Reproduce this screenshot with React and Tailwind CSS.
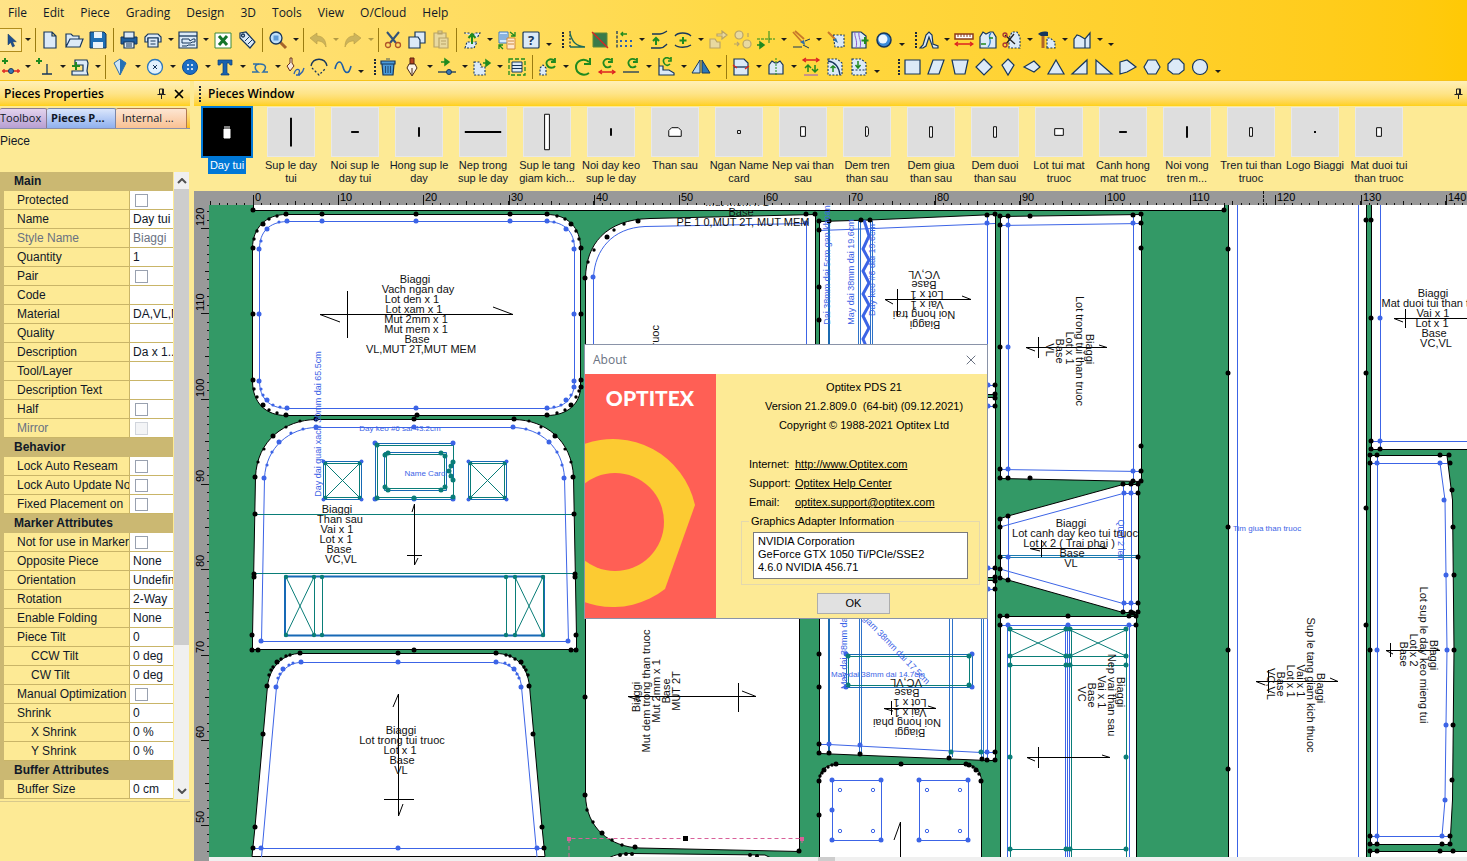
import { X } from 'lucide-react';

const NAVY = '#16365c';
const ICE = '#dceaf7';
const GREEN = '#1f8a1f';
const BLUE = '#3c64e6';
const TEAL = '#0a7d78';

const solid = { fill: ICE, stroke: NAVY, strokeWidth: 1.2 };
const line = { fill: 'none', stroke: NAVY, strokeWidth: 1.3 };
const green = { fill: 'none', stroke: GREEN, strokeWidth: 2 };
const red = { fill: 'none', stroke: '#d22', strokeWidth: 1.3 };
const dash = { fill: ICE, stroke: NAVY, strokeWidth: 1.1, strokeDasharray: '2 1.5' };
const faded = { fill: '#e8d9a0', stroke: '#b8a468', strokeWidth: 1.2 };
const plus = 'M4 1v6M1 4h6';

// toolbar drawings, all on a 20 x 20 grid
const ICONS = {
  cursor: <path d="M7 4v11l2.600-2.500 2 4.500 2-1-2-4.300h3.700z" fill="#1d4f91" stroke={NAVY} strokeWidth="0.500" />,
  new: <path d="M4 2h8l4 4v12H4zM12 2v4h4" {...solid} />,
  open: <path d="M2 17V4h5l2 2h6v3M2 17l4-8h13l-3 8z" {...solid} />,
  save: <><path d="M2 2h14l2 2v14H2z" fill="#1f6fb5" stroke={NAVY} /><path d="M6 2h8v6H6zM5 12h10v6H5z" fill="#eaf3fb" /></>,
  print: <><path d="M2 7h16v7H2z" fill="#1f5f9f" stroke={NAVY} /><path d="M5 2h10v6H5zM5 12h10v6H5z" {...solid} /><path d="M7 14h6M7 16h6" {...line} strokeWidth="1" /></>,
  plot: <><path d="M2 12V7l3-3h10l3 3v5h-3V8H5v4z" {...solid} /><path d="M5 8h10v9H5zM7.500 11h5M7.500 14h5" {...solid} /></>,
  layout: <><path d="M1 2h18v16H1z" {...solid} /><path d="M1 6h18" {...line} /><path d="M4 13V9h7l1 2 3-2h2v3h-3l-1 1zM4 16h5l1-1h7" {...line} strokeWidth="1" /></>,
  excel: <><path d="M2 3h16v15H2z" fill="#fff" stroke="#3a8a3a" /><path d="M6 6l8 9M14 6l-8 9" stroke="#14752a" strokeWidth="3" /></>,
  tag: <><path d="M3 3l6-1 9 10-5 6L3 8z" {...solid} /><circle cx="6" cy="5.500" r="1.500" {...line} /><path d="M8 11l4-4M11 14l4-4" {...line} strokeWidth="1" /></>,
  zoom: <><path d="M12 12l6 6" stroke="#a5642a" strokeWidth="3" /><circle cx="8" cy="8" r="6" fill="#bfe0fa" stroke={NAVY} strokeWidth="1.300" /><path d="M5.500 5.500h5v5h-5z" fill="#5e9bd6" /></>,
  undo: <path d="M2 8l7-5v3c6 0 9 4 9 11-2-5-5-6-9-6v3z" fill="#ccb45c" stroke="#b59b45" strokeWidth="0.600" />,
  redo: <path d="M18 8l-7-5v3C5 6 2 10 2 17c2-5 5-6 9-6v3z" fill="#ccb45c" stroke="#b59b45" strokeWidth="0.600" />,
  cut: <><path d="M4 2l9 11M16 2L7 13" stroke="#31527a" strokeWidth="2" /><circle cx="5" cy="15" r="2.500" {...line} stroke="#b0542a" /><circle cx="15" cy="15" r="2.500" {...line} stroke="#b0542a" /></>,
  copy: <><path d="M8 2h10v11H8z" {...solid} /><path d="M2 7h9l2 3v8H2z" {...solid} /></>,
  paste: <><path d="M3 3h12v14H3zM7 1h4v3H7z" {...faded} /><path d="M8 8h9v10H8zM10 11h5M10 14h5" {...faded} /></>,
  exportPiece: <><path d="M2 3h5l3 3 3-3h5l-3 5M3 18l2-6h10l-3 6z" {...dash} /><path d="M10 14V5M6.500 8L10 4l3.500 4" {...green} /></>,
  replace: <><path d="M2 2h9v11H2z" fill="#d6ebff" stroke="#3a7ac0" /><path d="M3 5h7M3 7h7M3 9h7" stroke="#3a7ac0" /><path d="M10 8h8v11h-8z" fill="#ffe9cf" stroke="#d08a3a" /><path d="M11 11h6M11 14h6" stroke="#d08a3a" /><path d="M13 2l5 4M18 2v4h-4M6 19l-4-4M2 19v-4h4" {...green} strokeWidth="1.300" /></>,
  help: <><rect x="2" y="2" width="16" height="16" rx="1" {...solid} /><text x="10" y="15" textAnchor="middle" fontSize="13" fontWeight="700" fill={NAVY}>?</text></>,
  curve: <><path d="M4 1v17" {...line} strokeDasharray="2 1.500" /><path d="M4 3c2 9 6 13 15 14M4 17h15" {...line} stroke="#1b6a5a" /></>,
  shade: <><path d="M3 3h14v14H3z" fill="#3a7a4a" stroke="#5c8a3a" /><path d="M2 2l16 16" {...red} /></>,
  points: <><path d="M3 1v18" {...line} strokeDasharray="3 1.500" /><path d="M13 4H7M9 2L7 4l2 2" {...green} strokeWidth="1.300" /><path d="M6 11h2M11 11h2M16 11h2M6 16h2M11 16h2M16 16h2" stroke="#2d62b0" strokeWidth="2" /></>,
  curveUp: <><path d="M3 4h8c4 0 5-2 7-3M2 18h9c4 0 5-2 7-4" {...line} /><path d="M7 15V9M4 11l3-3 3 3" {...green} /></>,
  curveAdd: <><path d="M2 6c3-4 12-4 16 0M2 15c3 3 12 3 16 0" {...line} /><path d="M10 7v7M6.500 10.500h7" {...green} /></>,
  fadedPiece: <><path d="M2 9h5l2 3h3v6H2z" {...faded} /><path d="M9 4h5V1l5 4-5 4V6H9z" {...faded} /></>,
  fadedRound: <><circle cx="7" cy="5" r="4" {...faded} /><circle cx="15" cy="14" r="4" {...faded} /><path d="M2 14h5M5 12l2 2-2 2M16 3v4" {...faded} /></>,
  addLine: <><path d="M1 9h18" {...line} stroke={GREEN} strokeWidth="1" strokeDasharray="3 1" /><path d="M13 1v12" {...line} stroke={GREEN} strokeWidth="1" /><path d="M1 15h4M4 12l4 3-4 3z" {...green} fill={GREEN} strokeWidth="1.500" /></>,
  brush: <><path d="M2 2l9 10M4 1l9 8" stroke="#c9782a" strokeWidth="1.800" /><path d="M9 12l4-2 1 5z" fill="#2d6ea8" /><path d="M2 17h9M12 15l6 3M14 11l5-2" {...line} strokeWidth="1" /></>,
  brushPiece: <><path d="M7 5h11v12H9z" {...dash} /><path d="M2 2l7 7" stroke="#c9782a" strokeWidth="2" /><path d="M7 10l3-2 2 5z" fill="#2d6ea8" /></>,
  waves: <><path d="M2 2h9l5 4v12H2z" {...solid} /><path d="M5 2c-1 5 3 8 1 16M9 2c-1 6 3 8 1 16" {...line} stroke="#8a5ad0" strokeWidth="1" /><path d="M15 7v7M11.500 10.500h7" {...green} /></>,
  ring: <><circle cx="10" cy="10" r="7" fill="#3b8ad8" stroke={NAVY} strokeWidth="1.500" /><circle cx="9" cy="9" r="4.500" fill="#eef7ff" /></>,
  compass: <path d="M1 18l3-3 3-10 3-3 3 3 1 9 5 2v2h-5l-4-11-3 9-3 2z" {...solid} />,
  ruler: <><path d="M1 4h18v5H1z" fill="#fff" stroke="#8a3a1a" strokeWidth="1.500" /><path d="M4 4v3M7 4v3M10 4v3M13 4v3M16 4v3" stroke="#8a3a1a" /><path d="M1 14h18M4 12l-3 2 3 2M16 12l3 2-3 2" {...red} /></>,
  splitPiece: <><path d="M2 18V7l3-5 3 2 4-2 3 0 3 5v11z" {...solid} /><path d="M13 3c-5 4 3 7-3 14" {...line} stroke="#2d7cc8" /><path d="M3 14h5M15 8h-4" {...green} strokeWidth="1.500" /></>,
  cutPiece: <><path d="M7 18V8l3-6h5l3 5v11z" {...dash} /><path d="M3 5l10 9M12 4L4 14" {...line} stroke="#222" /><circle cx="3" cy="15" r="2" {...line} stroke="#a33" /><circle cx="3" cy="5" r="2" {...line} stroke="#a33" /></>,
  hammer: <><path d="M6 4v14" stroke="#b0642a" strokeWidth="3" /><path d="M1 4c2-2 5-3 10-2v4H4z" fill={NAVY} /><path d="M10 18V8h3l5 4v6z" {...dash} /></>,
  twoPieces: <path d="M2 18V9l3-4 3 1 5 3 5-6v15zM13 9v9" {...solid} />,
  addPoint: <><path d={plus} {...green} /><path d="M1 14h18M3 12v4M17 12v4" {...red} /><circle cx="10" cy="14" r="2.500" fill="#3a78b8" stroke={NAVY} /></>,
  addNotch: <><path d={plus} {...green} /><path d="M12 7v10M7 17h10" {...line} /></>,
  sewing: <><path d="M5 3h12l1 3-1 8 1 4H2v-4h11V8H5z" {...solid} /><path d="M6 5v8M2 9h8" {...green} /></>,
  diamond: <><path d="M4 6l6-4 6 4-6 12z" fill="#cfe6f8" stroke="#2c6ca8" /><path d="M10 2l6 4-6 12z" fill="#2471b5" /></>,
  circleX: <><circle cx="10" cy="10" r="7.500" fill="#e2f1fd" stroke="#2c76ba" strokeWidth="1.300" /><path d="M8 8l4 4M12 8l-4 4" {...line} strokeWidth="1" /></>,
  button: <><circle cx="10" cy="10" r="7.500" fill="#1c6dc4" stroke="#0d4a94" /><g fill="#fff"><circle cx="8" cy="8" r="1" /><circle cx="12" cy="8" r="1" /><circle cx="8" cy="12" r="1" /><circle cx="12" cy="12" r="1" /></g></>,
  text: <path d="M3 3h14v5h-2l-1-2h-2v10l2 1v1H6v-1l2-1V6H6L5 8H3z" fill="#1a62ae" stroke="#0d3f78" strokeWidth="0.700" />,
  omega: <path d="M2 15h6c-4-3-4-8 2-8s7 4 3 8h5M3 7h6" fill="none" stroke="#2f6fa8" strokeWidth="1.500" />,
  penCurve: <><path d="M5 1v5l-3 3 3 5 4-5-2-3V1z" fill="#f7e9da" stroke="#6b3018" /><path d="M9 17c2-7 7-5 5-1s4 0 5-5M11 18h4" {...line} stroke="#2d62b0" /></>,
  arcDash: <><path d="M2 9c2-9 14-9 16 0" {...line} /><path d="M3 11l7 7 7-7" {...line} strokeDasharray="2 2" /></>,
  wave: <path d="M2 12c2-9 6-9 8-2s6 8 8-1" {...line} stroke="#1c5ea8" strokeWidth="1.600" />,
  trash: <><path d="M3 4h14v3H3zM4 7h12l-1 11H5z" fill="#4b9ad8" stroke={NAVY} strokeWidth="1.200" /><path d="M8 2h4M7.500 9v7M10 9v7M12.500 9v7" {...line} strokeWidth="0.800" /></>,
  pen: <><path d="M8 1h4v6H8z" fill="#b5431f" stroke="#5c2010" /><path d="M7 7h6l2 4-5 8-5-8z" fill="#fbf3e6" stroke="#4b2a18" /><path d="M10 11v7" stroke="#4b2a18" /></>,
  movePoint: <><path d="M4 5h4M8 2l4 3-4 3z" {...green} fill={GREEN} strokeWidth="1.500" /><path d="M1 15h18" {...line} /><circle cx="12" cy="15" r="2.500" fill="#3a78b8" stroke={NAVY} /></>,
  movePiece: <><path d="M2 5h5l2 3v2h4v8H2z" {...dash} /><path d="M11 6h4M14 3l4 3-4 3z" {...green} fill={GREEN} strokeWidth="1.500" /></>,
  frame: <><path d="M2 2h16v16H2z" fill="none" stroke={GREEN} strokeWidth="1.300" strokeDasharray="4 2" /><path d="M5 5h10v10H5zM5 8.500h10M5 11.500h10" {...solid} strokeWidth="1" /></>,
  rotatePiece: <><path d="M2 18v-7l3-3 3 3v7z" {...dash} /><path d="M17 4C12 0 7 4 9 8s7 3 8 1M17 1v4h-4" {...green} strokeWidth="1.800" /></>,
  rotate: <path d="M16 5C11 0 3 4 3 10s7 10 13 6M17 1v6h-6" {...green} />,
  rotateMeasure: <><path d="M14 3C9 0 5 4 7 8s6 2 7 1M15 1v4h-4" {...green} strokeWidth="1.800" /><path d="M2 15h16M5 13l-3 2 3 2M15 13l3 2-3 2" {...red} /></>,
  rotateLine: <><path d="M15 3C10 0 6 4 8 8s6 2 7 1M16 1v4h-4" {...green} strokeWidth="1.800" /><path d="M2 15h16" {...line} /></>,
  rotateEdge: <><path d="M3 1v17h15v-2l-5-3H7V9H3" {...solid} /><path d="M14 2C10-1 6 2 8 6s5 2 6 1M15 0v4h-3" {...green} strokeWidth="1.600" /></>,
  mirror: <><path d="M9 3v13H1z" fill="#b7d9f4" stroke={NAVY} /><path d="M11 3v13h8z" fill="#2b78b8" stroke={NAVY} /></>,
  seam: <><path d="M3 2h10l4 4v12H3z" {...solid} /><path d="M3 10h14" {...line} /><path d="M2 8l4 3M14 12l4-3" {...red} /></>,
  symmetric: <><path d="M3 17V8l3-4 3 2h2l3-2 3 4v9z" {...solid} /><path d="M10 1v18" stroke={GREEN} strokeDasharray="2 1" /></>,
  swap: <><path d="M2 3h16M5 1L2 3l3 2M15 1l3 2-3 2" {...red} /><path d="M7 15V8M4 11l3-3 3 3M14 8v7M11 12l3 3 3-3" {...green} strokeWidth="1.500" /><path d="M3 18h14" stroke="#9050d0" /></>,
  pieceArc: <><path d="M3 2h9l5 4v12H3z" {...dash} /><path d="M3 4c7 1 11 6 12 14" {...line} /><path d="M8 15V9M5.500 11L8 9l2.500 2" {...green} strokeWidth="1.500" /></>,
  pieceDown: <><path d="M3 2h9l5 4v12H3zM3 13h14" {...dash} /><path d="M9 4v6M6.500 8L9 11l2.500-3" {...green} strokeWidth="1.500" /></>,
  sRect: <path d="M3 3h15v14H3z" {...solid} />,
  sPara: <path d="M7 3h11l-5 14H2z" {...solid} />,
  sTrap: <path d="M2 3h16l-3 14H5z" {...solid} />,
  sRhomb: <path d="M10 2l8 8-8 8-8-8z" {...solid} />,
  sKite: <path d="M10 2l6 6-6 10-6-10z" {...solid} />,
  sKiteFlat: <path d="M2 10l10-6 6 6-6 5z" {...solid} />,
  sTri: <path d="M10 3l8 14H2z" {...solid} />,
  sRightTri: <path d="M17 3v14H2z" {...solid} />,
  sLeftTri: <path d="M2 3v14h16z" {...solid} />,
  sPent: <path d="M2 5l7-2 9 7-9 5-7 2z" {...solid} />,
  sHex: <path d="M6 3h8l4 7-4 7H6l-4-7z" {...solid} />,
  sOct: <path d="M7 2h6l5 5v6l-5 4H7l-5-4V7z" {...solid} />,
  sCircle: <circle cx="10" cy="10" r="7.500" {...solid} />,
};

// v = drop-down, x = dimmed drop-down, | and / = separators, o = overflow, g = grip
const ROW_ONE = 'new open save | print plot v layout v excel tag | zoom v / undo x redo x / cut copy paste | exportPiece v replace help o g curve shade points v curveUp curveAdd v fadedPiece fadedRound addLine v brush v brushPiece waves ring o g compass v ruler splitPiece cutPiece v hammer v twoPieces v o';
const ROW_TWO = 'v addNotch v sewing v / diamond v circleX v button v text v omega v penCurve arcDash wave o g trash pen v movePoint v movePiece v frame | rotatePiece v rotate rotateMeasure rotateLine v rotateEdge v mirror v / seam v symmetric v swap pieceArc pieceDown o G sRect sPara sTrap sRhomb sKite sKiteFlat sTri sRightTri sLeftTri sPent sHex sOct sCircle o';

const MENUS = ['File', 'Edit', 'Piece', 'Grading', 'Design', '3D', 'Tools', 'View', 'O/Cloud', 'Help'];

function Glyph({ name }) {
  return (
    <svg viewBox="0 0 20 20" className="h-5 w-5 shrink-0" aria-hidden="true">
      {ICONS[name]}
    </svg>
  );
}

function Caret({ faint }) {
  return (
    <svg viewBox="0 0 6 3" className="h-[3px] w-1.5" aria-hidden="true">
      <path d="M0 0h6L3 3z" fill={faint ? '#b39b45' : '#1c1c1c'} />
    </svg>
  );
}

function Grip({ className }) {
  return (
    <span className={`flex h-7 shrink-0 items-center justify-end ${className}`}>
      <span className="h-4 border-l-2 border-dotted border-gray-800" />
    </span>
  );
}

function ToolItem({ code }) {
  if (code === '|') return <span className="mx-[3px] h-6 w-px shrink-0 bg-[#9a7b10]" />;
  if (code === '/') return <span className="mx-0.5 h-6 w-px shrink-0 bg-[#9a7b10]" />;
  if (code === 'g') return <Grip className="w-2.5" />;
  if (code === 'G') return <Grip className="w-[18px]" />;
  if (code === 'v' || code === 'x') {
    return (
      <button aria-label="More" className="flex h-6 w-[11px] shrink-0 items-center justify-center">
        <Caret faint={code === 'x'} />
      </button>
    );
  }
  if (code === 'o') {
    return (
      <button aria-label="Toolbar options" className="flex h-6 w-[11px] shrink-0 items-end justify-center pb-1.5">
        <Caret />
      </button>
    );
  }
  return (
    <button aria-label={code} className="flex h-6 w-6 shrink-0 items-center justify-center">
      <Glyph name={code} />
    </button>
  );
}

function Toolbars() {
  return (
    <header className="shrink-0 overflow-hidden border-b border-[#f5c21a] bg-linear-to-r from-[#ffe387] via-[#ffd944] to-[#ffc905]">
      <nav className="flex h-[26px] items-center gap-4 pl-2 text-xs text-gray-900">
        {MENUS.map((m) => (
          <button key={m}>{m}</button>
        ))}
      </nav>
      <div className="flex h-[27px] items-center">
        <button aria-label="Select" className="flex h-6 w-[22px] shrink-0 items-center justify-center border border-l-0 border-[#b08c1c] bg-[#ffeaa0]">
          <Glyph name="cursor" />
        </button>
        <ToolItem code="v" />
        <ToolItem code="/" />
        {ROW_ONE.split(' ').map((c, i) => <ToolItem key={i} code={c} />)}
      </div>
      <div className="flex h-[27px] items-center">
        <button aria-label="Add point" className="flex h-6 w-[22px] shrink-0 items-center justify-center">
          <Glyph name="addPoint" />
        </button>
        {ROW_TWO.split(' ').map((c, i) => <ToolItem key={i} code={c} />)}
      </div>
    </header>
  );
}

function PinIcon() {
  return (
    <svg viewBox="0 0 9 11" className="h-[11px] w-[9px]" aria-hidden="true">
      <path d="M2.500 1h4v5h-4zM0.500 6.500h8M4.500 7v4M5.500 1v5" fill="none" stroke="#222" />
    </svg>
  );
}

const CHECK = Symbol('check');
const CHECK_OFF = Symbol('check-off');

const ROWS = [
  { head: 'Main' },
  { label: 'Protected', value: CHECK },
  { label: 'Name', value: 'Day tui' },
  { label: 'Style Name', value: 'Biaggi', dim: true },
  { label: 'Quantity', value: '1' },
  { label: 'Pair', value: CHECK },
  { label: 'Code', value: '' },
  { label: 'Material', value: 'DA,VL,MUT' },
  { label: 'Quality', value: '' },
  { label: 'Description', value: 'Da x 1..' },
  { label: 'Tool/Layer', value: '' },
  { label: 'Description Text', value: '' },
  { label: 'Half', value: CHECK },
  { label: 'Mirror', value: CHECK_OFF, dim: true },
  { head: 'Behavior' },
  { label: 'Lock Auto Reseam', value: CHECK },
  { label: 'Lock Auto Update Notches', value: CHECK },
  { label: 'Fixed Placement on', value: CHECK },
  { head: 'Marker Attributes' },
  { label: 'Not for use in Marker', value: CHECK },
  { label: 'Opposite Piece', value: 'None' },
  { label: 'Orientation', value: 'Undefined' },
  { label: 'Rotation', value: '2-Way' },
  { label: 'Enable Folding', value: 'None' },
  { label: 'Piece Tilt', value: '0' },
  { label: 'CCW Tilt', value: '0 deg', sub: true },
  { label: 'CW Tilt', value: '0 deg', sub: true },
  { label: 'Manual Optimization', value: CHECK },
  { label: 'Shrink', value: '0' },
  { label: 'X Shrink', value: '0 %', sub: true },
  { label: 'Y Shrink', value: '0 %', sub: true },
  { head: 'Buffer Attributes' },
  { label: 'Buffer Size', value: '0 cm' },
];

function PropertyRow({ row }) {
  if (row.head) {
    return (
      <tr className="h-[19px] bg-[#cbb872]">
        <th colSpan={3} className="overflow-hidden pb-px pl-3.5 text-left leading-[17px] font-bold whitespace-nowrap">{row.head}</th>
      </tr>
    );
  }
  const isCheck = row.value === CHECK || row.value === CHECK_OFF;
  const id = row.label.toLowerCase().replace(/[^a-z]+/g, '-');
  return (
    <tr className={`h-[19px] ${row.dim ? 'text-gray-500' : 'text-gray-900'}`}>
      <td className="bg-[#cbb872]" />
      <td className={`overflow-hidden border-b border-[#c9b568] leading-[18px] whitespace-nowrap ${row.sub ? 'pl-[27px]' : 'pl-[13px]'}`}>
        {isCheck ? <label htmlFor={id}>{row.label}</label> : row.label}
      </td>
      <td className="overflow-hidden border-b border-l border-[#c9b568] bg-white pl-[3px] leading-[18px] whitespace-nowrap">
        {isCheck ? (
          <input
            id={id}
            type="checkbox"
            disabled={row.value === CHECK_OFF}
            className="ml-0.5 block h-[13px] w-[13px] appearance-none border border-gray-400 bg-white disabled:border-gray-300 disabled:bg-gray-100"
          />
        ) : row.value}
      </td>
    </tr>
  );
}

function ScrollArrow({ d }) {
  return (
    <button aria-label="Scroll" className="flex h-[17px] w-full shrink-0 items-center justify-center bg-[#f0f0f0]">
      <svg viewBox="0 0 10 6" className="h-1.5 w-2.5" aria-hidden="true">
        <path d={d} fill="none" stroke="#505050" strokeWidth="2" />
      </svg>
    </button>
  );
}

function PropertiesPanel() {
  return (
    <aside className="flex w-[190px] shrink-0 flex-col bg-[#fdea95]">
      <div className="flex h-[25px] shrink-0 items-center bg-linear-to-b from-[#fff0b8] via-[#fee488] to-[#ffd011] pl-1 text-xs font-semibold text-black">
        <h2 className="flex-1 whitespace-nowrap">Pieces Properties</h2>
        <button aria-label="Pin" className="mr-1.5"><PinIcon /></button>
        <button aria-label="Close panel" className="mr-1"><X className="h-3.5 w-3.5" strokeWidth={3} /></button>
      </div>
      <div className="mt-0.5 flex h-[21px] shrink-0 items-end border-b border-[#8c90a8] bg-linear-to-b from-[#fdea95] to-[#fcbf12] text-[11px] whitespace-nowrap">
        <button className="h-5 w-[47px] rounded-t-xs border border-b-0 border-l-0 border-[#8a7a90] bg-linear-to-b from-[#e3d3ee] to-[#b79fd2] text-left">Toolbox</button>
        <button className="h-5 w-[69px] rounded-t-xs border border-b-0 border-l-0 border-[#7a86a8] bg-linear-to-b from-[#dbe6fb] to-[#8fb0ee] pl-1 text-left font-bold">Pieces P...</button>
        <button className="h-5 w-[71px] rounded-t-xs border border-b-0 border-l-0 border-[#b07a50] bg-linear-to-b from-[#fde6d2] to-[#f9c193] pl-1.5 text-left">Internal ...</button>
      </div>
      <p className="h-[43px] shrink-0 pt-1 font-[Liberation_Sans,sans-serif] text-xs">Piece</p>
      <div className="flex shrink-0 border-b border-[#d8c98c] pb-0.5">
        <table className="w-[173px] table-fixed border-separate border-spacing-0 font-[Liberation_Sans,sans-serif] text-xs">
          <colgroup>
            <col className="w-1" />
            <col className="w-[125px]" />
            <col />
          </colgroup>
          <tbody>
            {ROWS.map((row) => <PropertyRow key={row.head || row.label} row={row} />)}
          </tbody>
        </table>
        <div className="ml-px flex w-[15px] flex-col bg-[#f0f0f0]">
          <ScrollArrow d="M1 5l4-4 4 4" />
          <div className="h-[456px] bg-[#cdcdcd]" />
          <div className="flex-1" />
          <ScrollArrow d="M1 1l4 4 4-4" />
        </div>
      </div>
    </aside>
  );
}

const THUMBS = [
  ['Day tui', <path d="M21 19h6M21 21h6v9h-6z" fill="#fff" stroke="#fff" />],
  ['Sup le day tui', <path d="M24 9v30" strokeWidth="2" />],
  ['Noi sup le day tui', <path d="M20 24h8" strokeWidth="2" />],
  ['Hong sup le day', <path d="M24 19v10" strokeWidth="2" />],
  ['Nep trong sup le day', <path d="M5 24h38" strokeWidth="2" />],
  ['Sup le tang giam kich...', <path d="M21.500 5.500h5v37h-5z" />],
  ['Noi day keo sup le day', <path d="M24 20v8" strokeWidth="2" />],
  ['Than sau', <path d="M17.500 28.500v-6l3-3h7l3 3v6z" />],
  ['Ngan Name card', <path d="M22.500 22.500h3v3h-3z" />],
  ['Nep vai than sau', <path d="M21.500 18.500h5v10h-5z" />],
  ['Dem tren than sau', <path d="M22.500 18.500h2l1 2v6l-1 2h-2z" />],
  ['Dem giua than sau', <path d="M22.500 18.500h3v11h-3z" />],
  ['Dem duoi than sau', <path d="M22.500 18.500h3v11h-3z" />],
  ['Lot tui mat truoc', <path d="M19.500 20.500h9v7h-9z" />],
  ['Canh hong mat truoc', <path d="M20 24h8" strokeWidth="2" />],
  ['Noi vong tren m...', <path d="M24 18v12" strokeWidth="2" />],
  ['Tren tui than truoc', <path d="M22.500 19.500h3v9h-3z" />],
  ['Logo Biaggi', <path d="M23 24h2" strokeWidth="2" />],
  ['Mat duoi tui than truoc', <path d="M21.500 19.500h5v9h-5z" />],
];

function PiecesStrip() {
  return (
    <>
      <div className="flex h-[25px] shrink-0 items-center bg-linear-to-b from-[#fff0b8] via-[#fee488] to-[#ffd011] pr-1 text-xs font-semibold text-black">
        <Grip className="w-[7px]" />
        <h2 className="flex-1 pl-[7px]">Pieces Window</h2>
        <button aria-label="Pin"><PinIcon /></button>
      </div>
      <ul className="flex h-[85px] shrink-0 overflow-hidden bg-[#fdea95] pl-px font-[Liberation_Sans,sans-serif] text-[11px] leading-[13px]">
        {THUMBS.map(([name, shape], i) => (
          <li key={name} className="flex w-16 shrink-0 flex-col items-center text-center">
            <button className="flex w-full flex-col items-center">
              <span className={i === 0 ? 'border-2 border-[#0078d7] bg-black' : 'mt-px border border-[#e8e8e8] bg-[#dedede]'}>
                <svg viewBox="0 0 48 48" className={i === 0 ? 'h-12 w-12' : 'h-12 w-[46px]'} fill="#fff" stroke="#000">{shape}</svg>
              </span>
              <span className={i === 0 ? 'bg-[#0078d7] px-0.5 pt-px pb-0.5 text-white' : 'mt-0.5 w-[62px]'}>{name}</span>
            </button>
          </li>
        ))}
      </ul>
    </>
  );
}

const range = (n) => Array.from({ length: n }, (_, i) => i);

function TopRuler() {
  return (
    <svg className="h-3.5 w-full shrink-0 bg-[#999]" fontSize="11" fontFamily="Liberation Sans, sans-serif">
      <g transform="translate(-194 0)" stroke="#111">
        {range(148).map((i) => {
          const x = Math.round(210 + i * 8.52);
          return <path key={i} d={`M${x + 0.5} ${i % 5 ? 12 : 10}v4`} />;
        })}
        {range(15).map((i) => {
          const x = Math.round(253 + i * 85.2);
          return (
            <g key={i}>
              <path d={`M${x + 0.5} 4v10`} />
              <text x={x + 2} y="10" stroke="none">{i * 10}</text>
            </g>
          );
        })}
        <path d="M1263.500 0v14" strokeDasharray="3 1" />
      </g>
    </svg>
  );
}

function SideRuler() {
  return (
    <svg className="h-full w-[15px] shrink-0 bg-[#999]" fontSize="11" fontFamily="Liberation Sans, sans-serif">
      <g transform="translate(0 -205)" stroke="#111">
        {range(76).map((i) => {
          const y = Math.round(211 + i * 8.53);
          return <path key={i} d={`M${(i - 2) % 5 ? 13 : 11} ${y + 0.5}h4`} />;
        })}
        {range(8).map((i) => {
          const y = Math.round(228 + i * 85.3);
          return (
            <g key={i}>
              <path d={`M7 ${y + 0.5}h8`} />
              <text transform={`translate(10 ${y - 2}) rotate(-90)`} stroke="none">{120 - i * 10}</text>
            </g>
          );
        })}
      </g>
    </svg>
  );
}

function Dots({ at, color = '#000', r = 2.5 }) {
  return at.split(' ').map((p, i) => {
    const [x, y] = p.split(',');
    return <circle key={i} cx={x} cy={y} r={r} fill={color} />;
  });
}

function Lines({ d, color = BLUE, fill = 'none', width = 1 }) {
  return <path d={d} fill={fill} stroke={color} strokeWidth={width} />;
}

function Label({ x, y, turn = 0, size = 11, color = '#111', anchor = 'middle', children }) {
  return (
    <text transform={`translate(${x} ${y}) rotate(${turn})`} y="4" fontSize={size} fill={color} textAnchor={anchor}>
      {children}
    </text>
  );
}

// piece captions: one [x, y, text] entry per line
function Caption({ lines, turn = 0 }) {
  return lines.map(([x, y, text]) => <Label key={text} x={x} y={y} turn={turn}>{text}</Label>);
}

function Crossed({ x, y, s }) {
  return (
    <>
      <Lines color="#1769b5" d={`M${x} ${y}h${s}v${s}h-${s}z`} />
      <Lines color={TEAL} d={`M${x + 2} ${y + 2}h${s - 4}v${s - 4}h${4 - s}zl${s - 4} ${s - 4}M${x + s - 2} ${y + 2}l${4 - s} ${s - 4}`} />
      <Dots color={BLUE} r={2} at={`${x},${y} ${x + s},${y} ${x},${y + s} ${x + s},${y + s}`} />
      <Dots color={TEAL} r={2} at={`${x + 2},${y + 2} ${x + s - 2},${y + 2} ${x + 2},${y + s - 2} ${x + s - 2},${y + s - 2}`} />
    </>
  );
}

function LeftPieces() {
  return (
    <>
      <Lines color="#000" fill="#fff" d="M253.500 200V210.500H1224.500V200" />
      <Dots at="253,210 1224,210" />

      <Lines color="#000" fill="#fff" d="M286 214.500H547C568 214.500 580.500 228 580.500 248V387C580.500 403 568 415.500 547 415.500H286C266 415.500 252.500 403 252.500 381V248C252.500 228 266 214.500 286 214.500Z" />
      <Lines d="M287 221.500H547C565 222 574.500 232 574.500 249V381C574.500 398 565 408 547 408.500H287C269 408 259.500 398 259.500 381V249C259.500 232 269 222 287 221.500Z" />
      <Dots at="286,214 322,214 416,214 510,214 547,214 263,224 253,248 253,314 253,380 263,405 286,415 417,415 547,415 571,405 581,387 581,380 581,314 581,248 571,224" />
      <Dots r={1.7} at="257,231 254,239 269,219 277,216 557,216 565,219 576,231 579,239 254,389 257,397 269,410 277,413 557,413 565,410 576,397 579,391" />
      <Dots color={BLUE} at="287,221 322,221 416,221 510,221 547,221 267,229 259,249 259,314 259,381 267,400 287,408 416,408 547,408 566,400 574,387 574,381 574,314 574,249 566,229" />
      <Dots color={BLUE} r={1.6} at="279,222 261,241 554,222 573,241 261,389 263,395 273,405 280,407 554,407 561,405 571,395" />
      <Lines color="#000" d="M320 314.500H513L493 307M320 314.500L340 322M347.500 291V338" />
      <Caption lines={[[415, 279, 'Biaggi'], [418, 289, 'Vach ngan day'], [412, 299, 'Lot den x 1'], [414, 309, 'Lot xam x 1'], [416, 319, 'Mut 2mm x 1'], [416, 329, 'Mut mem x 1'], [417, 339, 'Base'], [421, 349, 'VL,MUT 2T,MUT MEM']]} />

      <Lines color="#000" fill="#fff" d="M252.500 649.500V636L255.500 477C257 440 285 420 316 419.500H514C545 420 572 440 573.500 477L576.500 636V649.500Z" />
      <Lines d="M261.500 641.500L264.500 478C266 447 290 428 316 427.500H513C540 428 563 447 564.500 478L568.500 641.500Z" />
      <Lines color={TEAL} d="M255 514.500H574M254 573.500H575" />
      <Dots at="255,477 273,436 316,419 414,419 514,419 555,436 573,477 255,514 574,514 254,574 575,574 254,577 575,577 252,635 576,635 252,650 258,650 414,650 571,650 576,650" />
      <Dots r={1.6} at="258,462 264,449 286,427 300,421 529,421 541,427 565,449 571,462" />
      <Dots color={BLUE} at="264,478 279,442 316,427 414,427 513,427 549,442 564,478 568,641 261,641" />
      <Dots color={BLUE} r={1.6} at="267,465 272,452 291,433 303,429 526,429 539,433 557,452 562,465" />
      <Crossed x={323.5} y={461.5} s={38} />
      <Crossed x={468.5} y={461.5} s={38} />
      <Lines color="#1769b5" d="M375.500 443.500H453.500V499.500H375.500ZM384.500 452.500H446.500V490.500H384.500Z" />
      <Lines color={TEAL} d="M377.500 445.500H453.500V462L449 471L453.500 480V497.500H377.500ZM386.500 454.500H444.500V488.500H386.500Z" />
      <Dots color={BLUE} at="375,443 453,443 375,499 453,499 414,499" />
      <Dots color={TEAL} at="385,455 388,453 441,453 445,456 385,487 388,490 441,490 445,487 377,445 453,462 449,471 453,480 453,497 377,498 414,498 451,466 451,476" />
      <Lines color="#1769b5" width="2" d="M285 576.500H544V635.500H285Z" />
      <Lines color={TEAL} d="M314.500 576V635M322.500 576V635M506.500 576V635M515.500 576V635M543.500 576V635M286 577L314 635M314 577L286 635M515 577L543 635M543 577L515 635" />
      <Dots color={TEAL} r={2.2} at="286,577 314,577 322,577 506,577 515,577 543,577 286,635 314,635 322,635 506,635 515,635 543,635" />
      <Label x={317} y={424} turn={-90} size={9} color={BLUE}>Day dai quai xach 30mm dai 65.5cm</Label>
      <Label x={400} y={427} size={8} color={BLUE}>Day keo #6 sai 43.2cm</Label>
      <Label x={425} y={472} size={8} color={BLUE}>Name Card</Label>
      <Lines color="#000" d="M412 512L414.500 504V565L418 558M407 555.500H422" />
      <Caption lines={[[337, 509, 'Biaggi'], [340, 519, 'Than sau'], [337, 529, 'Vai x 1'], [336, 539, 'Lot x 1'], [339, 549, 'Base'], [341, 559, 'VC,VL']]} />

      <Lines color="#000" fill="#fff" d="M252 856.500L255 827L267.500 686C270 665 285 653.500 300 653.500H496C515 653.500 527 665 529.500 686L542 827L545 856.500Z" />
      <Lines d="M261.500 857L276.500 687C279 670 290 662.500 301 662.500H496C508 662.500 520 670 521.500 687L537 857M253 848.500H544" />
      <Dots at="267,686 277,662 300,653 398,653 496,653 521,662 529,686 263,734 533,734 255,827 542,827 253,848 544,848" />
      <Dots r={1.7} at="269,675 271,670 273,667 281,659 286,656 290,655 506,655 510,656 515,659 524,667 526,670 528,675" />
      <Dots color={BLUE} at="301,662 283,669 276,687 398,662 496,662 514,669 521,687 261,848 398,848 537,848" />
      <Dots color={BLUE} r={1.6} at="278,678 280,674 289,665 293,663 505,663 509,665 517,674 519,678" />
      <Lines color="#000" d="M393 707L398.500 694V816L403 804M384 799.500H414" />
      <Caption lines={[[401, 730, 'Biaggi'], [402, 740, 'Lot trong tui truoc'], [400, 750, 'Lot x 1'], [402, 760, 'Base'], [401, 770, 'VL']]} />
    </>
  );
}

function MiddlePieces() {
  return (
    <>
      <Lines color="#000" fill="#fff" d="M585.500 400V278C586 245 605 219.500 650 218.500L815.500 214.500V400Z" />
      <Lines d="M593.500 400V277C595 250 612 228 645 226.500L806.500 223.500V400" />
      <Dots at="585,278 607,237 638,221 815,214 806,214" />
      <Dots r={1.7} at="588,262 594,250 614,230 624,224" />
      <Dots color={BLUE} at="593,277 806,223" />
      <Label x={737} y={202}>Mut mem x 1</Label>
      <Label x={741} y={212}>Base</Label>
      <Label x={743} y={222}>PE 1 0,MUT 2T, MUT MEM</Label>
      <Label x={655} y={325} turn={-90} anchor="end">Mat truoc</Label>

      <Lines color="#000" fill="#fff" d="M585.500 600V795C586 828 610 847 640 848L799.500 851.500V600Z" />
      <Dots at="585,697 585,795 602,833 635,847 799,851" />
      <Dots r={1.7} at="587,810 593,822 612,840 622,845" />
      <Lines color="#000" d="M628 696.500H756L742 691M628 696.500L641 701M738.500 683V712" />
      <Caption turn={-90} lines={[[636, 697, 'Biaggi'], [646, 691, 'Mut dem trong than truoc'], [656, 691, 'Mut 2mm x 1'], [666, 691, 'Base'], [676, 691, 'MUT 2T']]} />
      <Lines color="#000" fill="#fff" d="M606 860C612 855 620 853.500 632 853.500L765 855L775 860" />
      <Dots r={2} at="620,855 626,854 632,854 750,855 757,856" />
      <path d="M569 857V838.500H802V846" fill="none" stroke="#d9609a" strokeDasharray="4 3" />
      <rect x="567" y="837" width="4" height="4" fill="#d9609a" />
      <rect x="800" y="837" width="4" height="4" fill="#d9609a" />
      <rect x="683" y="836" width="5" height="5" fill="#000" />

      <Lines color="#000" fill="#fff" d="M819.500 753.500V221.500L870 220L995.500 214.500V394.500H985V397.500H995.500V577.500H985V580.500H995.500V760.500H987Z" />
      <Lines d="M819 230.500L861 229L995 223.500M987.500 215V760M819 744.500H829L981 752.500H995M988 385.500H995M988 406.500H995M988 568.500H995M988 589.500H995" />
      <Lines color="#1b6ab0" width="2" d="M829 221V753" />
      <Lines d="M858.500 221V345M860.500 221V345M870.500 221V345M872.500 221V345M859.500 600V754M861.500 600V754M949.500 600V757M952.500 600V757M981.500 600V758M983.500 600V758" color="#2e72c8" />
      <Lines width="3" d="M864 220L869 236L863 249L869 260L863 271L869 283L863 294L869 305L863 316L869 328L863 339L866 346" />
      <Dots at="819,221 829,221 861,220 870,220 987,215 995,214 819,230 819,287 819,320 995,385 995,394 995,398 995,406 995,568 995,577 995,581 995,589 819,654 819,687 819,744 819,753 829,753 860,754 949,758 982,759 987,760 995,760 995,752" />
      <Dots color={BLUE} at="987,223 829,744 860,745 988,385 988,406 988,568 988,589 987,752" />
      <Dots color={TEAL} at="951,752 981,752" />
      <Label x={826} y={265} turn={-90} size={9} color={BLUE}>Dai 38mm dai 5cm gan khoan</Label>
      <Label x={850} y={272} turn={-90} size={9} color={BLUE}>May dai 38mm dai 19.6cm</Label>
      <Label x={871} y={270} turn={-90} size={9} color={BLUE}>Day keo #6 dai 19.6cm</Label>
      <Lines color="#000" d="M893 304L885 299.500H971L962 296M897.500 289V316" />
      <Caption turn={180} lines={[[925, 325, 'Biaggi'], [924, 315, 'Noi hong trai'], [927, 305, 'Vai x 1'], [927, 295, 'Lot x 1'], [924, 285, 'Base'], [924, 275, 'VC,VL']]} />

      <Lines color="#1769b5" d="M846.500 654.500H972.500V687.500H846.500Z" />
      <Lines color={TEAL} d="M848.500 656.500H969.500V685.500H848.500Z" />
      <Dots color={BLUE} at="846,654 972,654 846,687 972,687" />
      <Dots color={TEAL} at="848,656 969,656 848,685 969,685" />
      <Label x={878} y={673} size={8} color={BLUE}>May dai 38mm dai 14.7cm</Label>
      <Label x={843} y={689} turn={-90} size={9} color={BLUE} anchor="start">May dai 38mm dai 17.5cm</Label>
      <Label x={929} y={682} turn={46} size={9} color={BLUE} anchor="end">Tam gam 38mm dai 17.5cm</Label>
      <Lines color="#000" d="M893 711L884 708.500H936L928 706M891.500 701V715" />
      <Caption turn={180} lines={[[910, 733, 'Biaggi'], [907, 723, 'Noi hong phai'], [910, 713, 'Vai x 1'], [910, 703, 'Lot x 1'], [907, 693, 'Base'], [906, 683, 'VC,VL']]} />

      <Lines color="#000" fill="#fff" d="M819.500 860V781C819.500 770 826 764.500 836 764.500H966C976 765 981 772 981.500 781V860" />
      <Dots at="819,781 836,764 901,764 966,764 969,765 976,770 981,781 819,815 824,770" />
      <Dots r={1.7} at="820,776 822,773 828,767 832,765 973,767 979,774" />
      <Lines d="M832.500 780.500H881.500V840.500H832.500ZM919.500 780.500H968.500V840.500H919.500Z" />
      <Dots color={BLUE} at="832,780 881,780 832,840 881,840 832,810 919,780 968,780 919,840 968,840" />
      {['840,790', '873,790', '840,831', '873,831', '927,790', '960,790', '927,831', '960,831'].map((p) => {
        const [x, y] = p.split(',');
        return <circle key={p} cx={x} cy={y} r="1.700" fill="none" stroke={BLUE} />;
      })}
      <Lines color="#000" d="M894 840L900.500 822V860" />
    </>
  );
}

function RightPieces() {
  return (
    <>
      <Lines color="#000" fill="#fff" d="M1000.500 216.500L1141.500 214.500V481.500L1000.500 478.500Z" />
      <Lines d="M1008.500 216V478M1133.500 215V481M1000 225.500L1141 223.500M1000 469.500L1141 471.500" />
      <Dots at="1000,216 1008,216 1030,216 1133,215 1141,214 1000,225 1141,223 1141,248 1000,347 1141,446 1000,469 1000,478 1008,478 1030,478 1141,471 1133,481 1141,481" />
      <Dots color={BLUE} at="1008,225 1133,223 1008,347 1008,469 1133,471" />
      <Lines color="#000" d="M1035 351L1026 347.500H1107L1099 345M1038.500 337V358" />
      <Caption turn={90} lines={[[1090, 349, 'Biaggi'], [1080, 351, 'Lot trong tui than truoc'], [1070, 348, 'Lot x 1'], [1060, 351, 'Base'], [1050, 350, 'VL']]} />

      <Lines color="#000" fill="#fff" d="M1000.500 518.500L1008 516L1123 484.500H1138.500V612.500H1123L1008 580L1000.500 578Z" />
      <Lines d="M1000 527L1123 493.500H1138M1000 569L1123 603.500H1138M1008.500 516V580M1123.500 485V612M1131.500 485V612" />
      <Lines color="#1b7ab0" d="M1001 555.500H1138M1001 557.500H1138" />
      <Dots at="1000,519 1008,516 1123,484 1131,484 1138,484 1138,493 1000,527 1000,557 1138,557 1000,569 1000,578 1008,580 1138,603 1123,612 1131,612 1138,612" />
      <Dots color={BLUE} at="1124,493 1131,493 1008,557 1124,603 1131,603" />
      <Label x={1122} y={540} turn={90} size={9} color={BLUE}>Quai 2 len</Label>
      <Lines color="#000" d="M1040 551L1030 548.500H1107L1099 546M1041.500 540V557" />
      <Caption lines={[[1071, 523, 'Biaggi'], [1075, 533, 'Lot canh day keo tui truoc'], [1069, 543, 'Lot x 2 ( Trai phai )'], [1072, 553, 'Base'], [1071, 563, 'VL']]} />

      <Lines color="#000" fill="#fff" d="M1000.500 860V616.500H1136.500V860" />
      <Lines d="M1001 625.500H1136M1007.500 626V860M1129.500 626V860M1065.500 626V860M1067.500 626V860M1069.500 626V860" />
      <Lines color={TEAL} d="M1010.500 860V629.500H1126.500V860M1071.500 630V860M1010 656.500H1126M1010 665.500H1126M1010 849.500H1126M1010 630L1066 656M1066 630L1010 656M1070 630L1126 656M1126 630L1070 656" />
      <Dots at="1000,616 1007,616 1068,616 1129,616 1136,616 1000,625 1136,625 1133,613" />
      <Dots color={BLUE} at="1008,625 1068,625 1129,625" />
      <Dots color={TEAL} at="1010,629 1066,629 1070,629 1126,629 1010,656 1066,656 1070,656 1126,656 1010,665 1066,665 1070,665 1126,665 1010,757 1126,757 1010,849 1066,849 1070,849 1126,849" />
      <Lines color="#000" d="M1035 761L1027 757.500H1110L1102 755M1038.500 747V768" />
      <Caption turn={90} lines={[[1121, 692, 'Biaggi'], [1112, 695, 'Nep vai than sau'], [1102, 692, 'Vai x 1'], [1092, 695, 'Base'], [1082, 694, 'VC']]} />

      <Lines color="#000" fill="#fff" d="M1228.500 200V860H1366.500V200" />
      <Lines d="M1237.500 200V860M1358.500 200V860" />
      <Dots at="1228,249 1228,373 1228,527 1228,650 1228,769 1366,220 1366,373 1366,508 1366,625" />
      <Label x={1233} y={527} size={8} color={BLUE} anchor="start">Tim giua than truoc</Label>
      <Lines color="#000" d="M1265 685L1256 681.500H1338L1330 678M1268.500 670V693" />
      <Caption turn={90} lines={[[1321, 688, 'Biaggi'], [1311, 685, 'Sup le tang giam kich thuoc'], [1301, 681, 'Vai x 1'], [1291, 681, 'Lot x 1'], [1281, 684, 'Base'], [1271, 684, 'VC,VL']]} />

      <Lines color="#000" fill="#fff" d="M1371.500 200V449.500H1500V200" />
      <Lines d="M1380.500 200V449M1372 441.500H1500" />
      <Dots at="1371,220 1371,318 1371,441 1371,449 1380,449" />
      <Dots color={BLUE} at="1380,318 1380,441" />
      <Lines color="#000" d="M1403 322L1394 318.500H1470M1405.500 309V328" />
      <Caption lines={[[1433, 293, 'Biaggi'], [1436, 303, 'Mat duoi tui than truoc'], [1433, 313, 'Vai x 1'], [1432, 323, 'Lot x 1'], [1434, 333, 'Base'], [1436, 343, 'VC,VL']]} />

      <Lines color="#000" fill="#fff" d="M1370.500 455.500H1447L1452.500 500L1454 650L1452.500 800L1450 844.500H1370.500Z" />
      <Lines d="M1377.500 456V844M1371 463.500H1450M1371 836.500H1450M1440 463L1445 500L1447 650L1445 800L1442 836" />
      <Dots at="1370,455 1377,455 1440,455 1449,455 1370,463 1450,463 1452,490 1453,527 1454,575 1454,650 1453,725 1452,780 1450,836 1370,650 1370,836 1370,844 1377,844 1442,844 1450,844" />
      <Dots color={BLUE} at="1377,463 1440,463 1377,650 1447,650 1444,500 1446,575 1446,725 1445,800 1377,836 1442,836" />
      <Lines color="#000" d="M1393 654L1386 650.500H1440L1434 648M1390.500 643V657" />
      <Caption turn={90} lines={[[1434, 655, 'Biaggi'], [1424, 655, 'Lot sup le day keo mieng tui'], [1414, 650, 'Lot x 2'], [1404, 654, 'Base']]} />
      <Lines color="#000" fill="#fff" d="M1370.500 860V851.500H1500V860" />
      <Dots at="1370,851 1377,851 1440,851 1453,851" />
    </>
  );
}

function AboutDialog() {
  return (
    <section role="dialog" aria-labelledby="about-title" className="absolute top-[139px] left-[375px] flex w-[404px] flex-col border border-[#8a93a8] bg-white">
      <div className="flex h-[29px] items-center justify-between pr-2 pl-2">
        <h2 id="about-title" className="text-xs text-gray-500">About</h2>
        <button aria-label="Close"><X className="h-4 w-4 text-gray-500" strokeWidth={1.5} /></button>
      </div>
      <div className="flex">
        <div className="h-[244px] w-[131px] shrink-0 overflow-hidden bg-[#ff5f55]">
          <svg viewBox="0 0 131 244" className="h-full w-full" aria-hidden="true">
            <path d="M110 131A84 84 0 1 0 80 215Z" fill="#fccb32" />
            <circle cx="30" cy="148" r="49" fill="#ff5f55" />
            <text x="65" y="32" textAnchor="middle" fontFamily="Lato, sans-serif" fontWeight="900" fontSize="21" fill="#fff">OPTITEX</text>
          </svg>
        </div>
        <div className="flex-1 bg-[#fdea95] pl-[25px] font-[Liberation_Sans,sans-serif] text-[11px] text-black">
          <div className="pt-1 text-center leading-[19px] whitespace-pre">
            <p>Optitex PDS 21</p>
            <p>Version 21.2.809.0  (64-bit) (09.12.2021)</p>
            <p>Copyright © 1988-2021 Optitex Ltd</p>
          </div>
          <dl className="mt-5 mb-[3px] grid grid-cols-[46px_1fr] pl-2 leading-[19px]">
            <dt>Internet:</dt>
            <dd><a href="#internet" className="underline">http://www.Optitex.com</a></dd>
            <dt>Support:</dt>
            <dd><a href="#support" className="underline">Optitex Help Center</a></dd>
            <dt>Email:</dt>
            <dd><a href="#email" className="underline">optitex.support@optitex.com</a></dd>
          </dl>
          <fieldset className="mr-[7px] border border-[#e3d8ae] px-[11px] pb-[5px]">
            <legend className="-ml-1 px-0.5 leading-[13px]"><label htmlFor="adapter">Graphics Adapter Information</label></legend>
            <textarea
              id="adapter"
              readOnly
              rows={3}
              className="mt-1 block h-[47px] w-full resize-none overflow-hidden border border-[#7a7a7a] bg-white px-1 py-0.5 leading-[13px]"
              defaultValue={'NVIDIA Corporation\nGeForce GTX 1050 Ti/PCIe/SSE2\n4.6.0 NVIDIA 456.71'}
            />
          </fieldset>
          <button className="mt-2 ml-[76px] block h-[21px] w-[73px] border border-[#adadad] bg-[#e1e1e1]">OK</button>
        </div>
      </div>
    </section>
  );
}

function Canvas() {
  return (
    <div className="relative flex min-w-0 flex-1 flex-col overflow-hidden">
      <svg className="min-h-0 w-full flex-1 bg-[#339966]" fontFamily="Liberation Sans, sans-serif">
        <g transform="translate(-209 -205)">
          <LeftPieces />
          <MiddlePieces />
          <RightPieces />
        </g>
      </svg>
      <div className="h-1 shrink-0 bg-[#f0f0f0] pl-[609px]">
        <div className="h-1 w-[17px] bg-[#cdcdcd]" />
      </div>
      <AboutDialog />
    </div>
  );
}

export default function App() {
  return (
    <div className="flex h-screen flex-col overflow-hidden bg-[#fdea95] font-[Open_Sans,Noto_Sans,sans-serif] text-gray-900">
      <Toolbars />
      <div className="flex min-h-0 flex-1">
        <PropertiesPanel />
        <div className="w-1 shrink-0 bg-[#fdea95]" />
        <main className="flex min-w-0 flex-1 flex-col">
          <PiecesStrip />
          <TopRuler />
          <div className="flex min-h-0 flex-1">
            <SideRuler />
            <Canvas />
          </div>
        </main>
      </div>
    </div>
  );
}
